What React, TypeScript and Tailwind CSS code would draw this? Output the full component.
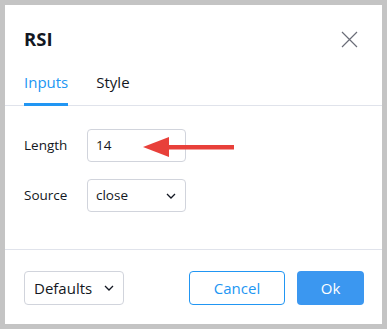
import React from "react";

export default function App() {
  const font = { fontFamily: '"Open Sans", "DejaVu Sans", sans-serif' };
  return (
    <div className="w-[387px] h-[329px] bg-[#c4c4c4] p-[5px]" style={font}>
      <div className="w-full h-full bg-white flex flex-col">
        <div className="flex items-center justify-between pl-[19px] pr-[24px] h-[52px] pt-[16px]">
          <div className="text-[18.5px] font-bold text-[#131722] leading-none">RSI</div>
          <svg width="17" height="17" viewBox="0 0 17 17">
            <path d="M1 1 L16 16 M16 1 L1 16" stroke="#6a6d78" strokeWidth="1.2" fill="none" />
          </svg>
        </div>
        <div className="flex items-end gap-[28px] pl-[19px] border-b border-[#e0e3eb] h-[49px]">
          <div className="relative pb-[15px] text-[15px] text-[#2196f3] leading-none">
            Inputs
            <div className="absolute left-0 right-0 bottom-[-1px] h-[3px] bg-[#2196f3]" />
          </div>
          <div className="pb-[15px] text-[15px] text-[#131722] leading-none">Style</div>
        </div>
        <div className="flex flex-col gap-[17px] pl-[19px] pt-[23px] h-[144px] border-b border-[#e0e3eb]">
          <div className="flex items-center relative">
            <div className="w-[63px] text-[13.5px] text-[#131722]">Length</div>
            <div className="w-[99px] h-[33px] border border-[#d1d4dc] rounded-[4px] flex items-center pl-[8px] text-[13.5px] text-[#131722]">14</div>
            <svg className="absolute left-[119px] top-[8px]" width="92" height="22" viewBox="0 0 92 22">
              <polygon points="0,10 26,0 26,20" fill="#e8403a" />
              <rect x="24" y="8" width="67" height="4.5" fill="#e8403a" />
            </svg>
          </div>
          <div className="flex items-center">
            <div className="w-[63px] text-[13.5px] text-[#131722]">Source</div>
            <div className="w-[99px] h-[33px] border border-[#d1d4dc] rounded-[4px] flex items-center justify-between pl-[8px] pr-[9px] text-[13.5px] text-[#131722]">
              <span>close</span>
              <svg width="10" height="6" viewBox="0 0 10 6">
                <path d="M1 1 L5 5 L9 1" stroke="#131722" strokeWidth="1.3" fill="none" />
              </svg>
            </div>
          </div>
        </div>
        <div className="flex items-center justify-between pl-[19px] pr-[18px] pt-[2px] flex-1">
          <div className="w-[100px] h-[34px] border border-[#d1d4dc] rounded-[4px] flex items-center justify-between pl-[9px] pr-[9px] text-[15px] text-[#131722]">
            <span>Defaults</span>
            <svg width="10" height="6" viewBox="0 0 10 6">
              <path d="M1 1 L5 5 L9 1" stroke="#131722" strokeWidth="1.3" fill="none" />
            </svg>
          </div>
          <div className="flex gap-[12px]">
            <div className="w-[96px] h-[34px] border border-[#2196f3] rounded-[4px] flex items-center justify-center text-[15px] text-[#2196f3]">Cancel</div>
            <div className="w-[67px] h-[34px] bg-[#3b97f0] rounded-[4px] flex items-center justify-center text-[15px] text-white">Ok</div>
          </div>
        </div>
      </div>
    </div>
  );
}
